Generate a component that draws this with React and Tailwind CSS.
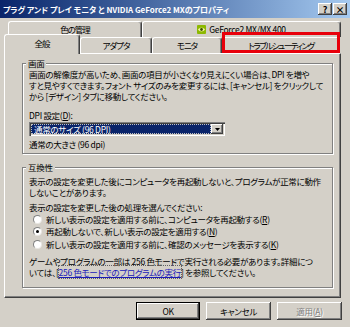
const raised = 'shadow-[inset_-1px_-1px_#404040,inset_1px_1px_#ffffff,inset_-2px_-2px_#808080]';

function TitleButton({ children }) {
  return (
    <div className={`w-[14px] h-[12px] bg-[#d4d0c8] flex items-center justify-center text-[9px] font-bold leading-none text-black tracking-normal ${raised}`}>
      {children}
    </div>
  );
}

function TitleBar() {
  return (
    <div className="h-[18px] flex items-center pl-[3px] pr-[3px] bg-gradient-to-r from-[#0a246a] to-[#a6caf0]">
      <span className="flex-1 text-white font-bold text-[8px] tracking-[-0.05px] whitespace-nowrap">
        プラグ アンド プレイ モニタ と NVIDIA GeForce2 MXのプロパティ
      </span>
      <div className="flex gap-[1px]">
        <TitleButton>?</TitleButton>
        <TitleButton>×</TitleButton>
      </div>
    </div>
  );
}

function Tab({ width, selected, children }) {
  return (
    <div
      className={`${width} flex items-center justify-center whitespace-nowrap bg-[#d4d0c8] rounded-t-[3px] border-t border-l border-white border-r border-r-[#404040] shadow-[inset_-1px_0_#808080] ${
        selected ? 'relative z-10 -mt-[2px] h-[20px] pb-[3px]' : 'mt-[1px] h-[16px]'
      }`}
    >
      {children}
    </div>
  );
}

function NvidiaIcon() {
  return (
    <svg width="9" height="9" viewBox="0 0 9 9" className="mr-[3px]">
      <rect x="0" y="0" width="9" height="9" rx="1" fill="#8cb800" />
      <path d="M1 4.5 C2.5 2 6.5 2 8 4.5 C6.5 7 2.5 7 1 4.5 Z" fill="#f2f2a0" />
      <circle cx="4.5" cy="4.5" r="1.4" fill="#3c5200" />
    </svg>
  );
}

function Tabs() {
  return (
    <div className="flex flex-col mt-[2px] tracking-[-1px]">
      <div className="flex h-[16px] ml-[4px]">
        <Tab width="w-[134px]">色の管理</Tab>
        <Tab width="w-[199px]">
          <NvidiaIcon />
          <span className="tracking-[-0.3px]">GeForce2 MX/MX 400</span>
        </Tab>
      </div>
      <div className="flex items-start h-[17px]">
        <Tab width="w-[76px]" selected>全般</Tab>
        <Tab width="w-[72px]">アダプタ</Tab>
        <Tab width="w-[70px]">モニタ</Tab>
        <div className="relative">
          <Tab width="w-[118px]">
            <span className="tracking-[-1.5px]">トラブルシューティング</span>
          </Tab>
          <div className="absolute -top-[4px] left-0 right-0 bottom-0 border-[3px] border-[#e8000b] z-20" />
        </div>
      </div>
    </div>
  );
}

function Group({ title, className, children }) {
  return (
    <div className={`relative ml-[17px] w-[311px] border border-[#808080] shadow-[1px_1px_0_#ffffff,inset_1px_1px_0_#ffffff] ${className}`}>
      <span className="absolute -top-[6px] left-[3px] px-[2px] bg-[#d4d0c8]">{title}</span>
      {children}
    </div>
  );
}

function Radio({ checked, children }) {
  return (
    <div className="flex items-center h-[12.5px] pl-[4px] whitespace-nowrap">
      <span className="w-[9px] h-[9px] mr-[4px] shrink-0 rounded-full bg-white border border-[#808080] border-r-[#e8e6e2] border-b-[#e8e6e2] flex items-center justify-center">
        {checked && <span className="w-[3px] h-[3px] rounded-full bg-black" />}
      </span>
      {children}
    </div>
  );
}

function Panel() {
  return (
    <div className="w-[337px] h-[245px] border border-t-white border-l-white border-r-[#404040] border-b-[#404040] shadow-[inset_-1px_-1px_#808080] flex flex-col">
      <Group title="画面" className="mt-[9px] h-[91px] pt-[5px] pl-[6px]">
        <div className="whitespace-nowrap">
          <div>画面の解像度が高いため、画面の項目が小さくなり見えにくい場合は、DPI を増や</div>
          <div>すと見やすくできます。フォント サイズのみを変更するには、[キャンセル] をクリックして</div>
          <div>から [デザイン] タブに移動してください。</div>
        </div>
        <div className="mt-[8px]">
          DPI 設定(<span className="underline">D</span>):
        </div>
        <div className="mt-[1px] w-[196px] h-[14px] bg-white flex items-center p-[2px] shadow-[inset_1px_1px_#808080,inset_2px_2px_#404040,inset_-1px_-1px_#ffffff,inset_-2px_-2px_#d4d0c8]">
          <div className="flex-1 h-full bg-[#0a246a] text-white flex items-center pl-[2px] border border-dotted border-[#c0c0c0]">
            通常のサイズ (96 DPI)
          </div>
          <div className={`w-[12px] h-full bg-[#d4d0c8] flex items-center justify-center ${raised}`}>
            <svg width="5" height="3" viewBox="0 0 5 3">
              <path d="M0 0 H5 L2.5 3 Z" fill="#000" />
            </svg>
          </div>
        </div>
        <div className="mt-[3px]">通常の大きさ (96 dpi)</div>
      </Group>
      <Group title="互換性" className="mt-[13px] h-[121px] pt-[8px] pl-[6px]">
        <div className="whitespace-nowrap">
          <div>表示の設定を変更した後にコンピュータを再起動しないと、プログラムが正常に動作</div>
          <div>しないことがあります。</div>
        </div>
        <div className="mt-[4px]">表示の設定を変更した後の処理を選んでください:</div>
        <Radio>
          新しい表示の設定を適用する前に、コンピュータを再起動する(<span className="underline">R</span>)
        </Radio>
        <Radio checked>
          再起動しないで、新しい表示の設定を適用する(<span className="underline">N</span>)
        </Radio>
        <Radio>
          新しい表示の設定を適用する前に、確認のメッセージを表示する(<span className="underline">K</span>)
        </Radio>
        <div className="mt-[5px] whitespace-nowrap">
          <div>ゲームやプログラムの一部は 256 色モードで実行される必要があります。詳細につ</div>
          <div>
            いては、[<span className="text-[#1a1ab8] underline outline-1 outline-dotted outline-[#606060]">256 色モードでのプログラムの実行</span>] を参照してください。
          </div>
        </div>
      </Group>
    </div>
  );
}

function Button({ children, isDefault, disabled, width }) {
  return (
    <div
      className={`${width} h-[18px] flex items-center justify-center bg-[#d4d0c8] ${raised} ${
        isDefault ? 'outline outline-1 outline-black -outline-offset-1 shadow-[inset_-2px_-2px_#404040,inset_2px_2px_#ffffff,inset_-3px_-3px_#808080]' : ''
      } ${disabled ? 'text-[#808080] [text-shadow:1px_1px_#ffffff]' : ''}`}
    >
      {children}
    </div>
  );
}

function Buttons() {
  return (
    <div className="w-[338px] flex justify-end gap-[6px] mt-[4px]">
      <Button width="w-[64px]" isDefault>OK</Button>
      <Button width="w-[65px]">キャンセル</Button>
      <Button width="w-[65px]" disabled>
        適用(<span className="underline">A</span>)
      </Button>
    </div>
  );
}

export default function App() {
  return (
    <div className="w-[350px] h-[327px] overflow-hidden bg-[#d4d0c8] flex flex-col font-['Noto_Sans_CJK_JP',sans-serif] text-[8.5px] leading-[11px] tracking-[-0.3px] text-black [font-feature-settings:'palt']">
      <TitleBar />
      <div className="flex flex-col pl-[4px]">
        <Tabs />
        <Panel />
        <Buttons />
      </div>
    </div>
  );
}
